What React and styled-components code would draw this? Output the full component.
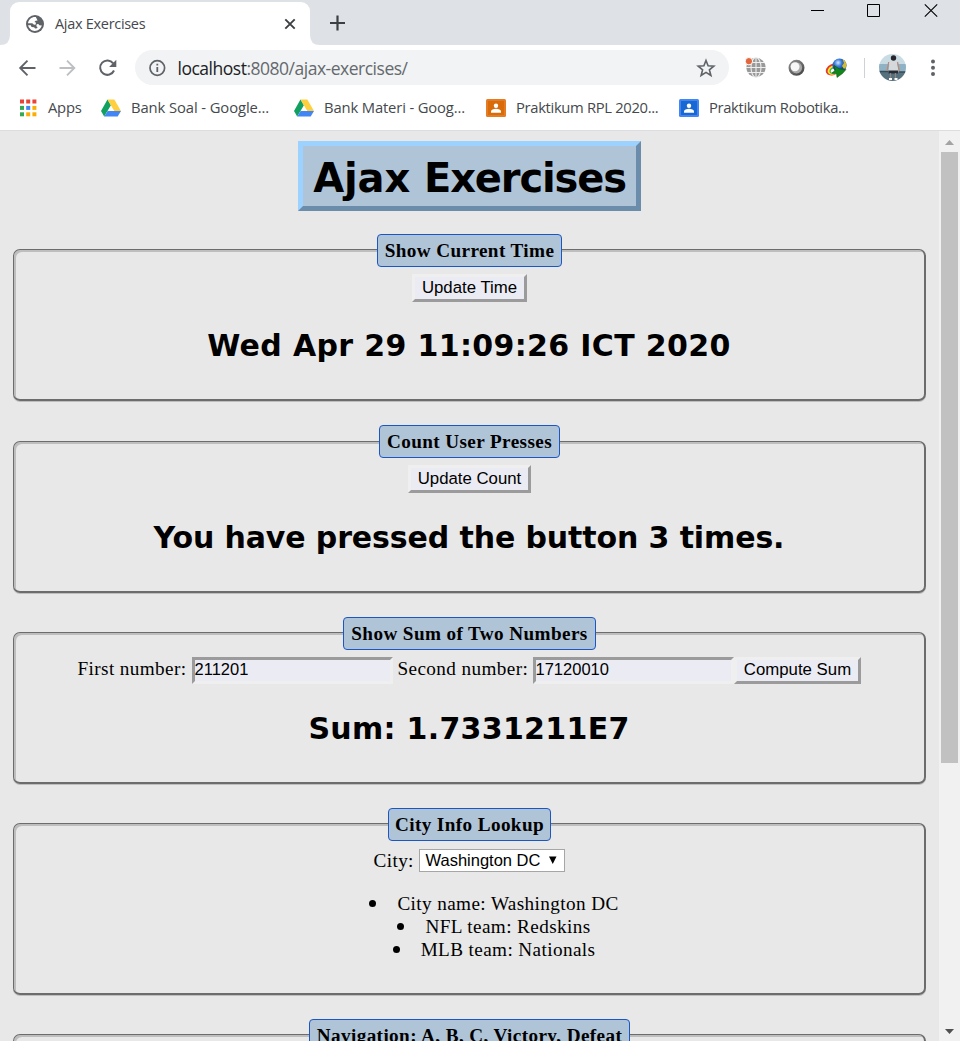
import React from 'react';
import styled, { createGlobalStyle } from 'styled-components';

const Global = createGlobalStyle`
  * { box-sizing: border-box; }
  html, body, #root { margin: 0; height: 1041px; overflow: hidden; }
  button, input, select { margin: 0; border-radius: 0; }
`;
const Window = styled.div`
  width: 960px; height: 1041px; overflow: hidden;
  display: flex; flex-direction: column; background: #e8e8e8;
  font-family: "Open Sans", "Noto Sans", sans-serif;
`;
const TabStrip = styled.header`
  height: 45px; flex: none; background: #dee1e6; display: flex; align-items: flex-end;
`;
const Curve = styled.svg`width: 10px; height: 10px; display: block; flex: none;`;
const Tab = styled.div`
  width: 300px; height: 43px; background: #fff; border-radius: 9px 9px 0 0;
  display: flex; align-items: center; padding: 0 13px 0 16px;
`;
const TabTitle = styled.span`
  flex: 1; margin-left: 11px; font-size: 14.5px; letter-spacing: ${p => p.$ls || 0}px; color: #45494d; white-space: nowrap;
`;
const NewTab = styled.svg`width: 16px; height: 16px; margin: 0 0 14px 9px;`;
const WindowButtons = styled.div`
  margin-left: auto; align-self: flex-start; display: flex; gap: 42px; padding: 3px 22px 0 0;
`;
const Toolbar = styled.div`
  height: 45px; flex: none; background: #fff; display: flex; align-items: center; padding: 0 17px;
`;
const NavIcon = styled.svg`width: 20px; height: 20px; flex: none; margin-right: 20px;`;
const Omnibox = styled.div`
  width: 594px; height: 35px; margin-left: -2px; border-radius: 18px; background: #f1f3f4;
  display: flex; align-items: center; padding: 0 13px 0 13px; flex: none;
`;
const Url = styled.span`
  flex: 1; margin-left: 11.5px; font-size: 17.5px; letter-spacing: ${p => p.$ls || 0}px; color: #65696e;
  white-space: nowrap; line-height: 34px;
`;
const Host = styled.span`color: #202124;`;
const Extensions = styled.div`display: flex; align-items: center; margin-left: 15px; flex: none;`;
const Separator = styled.i`width: 1px; height: 20px; background: #cfd1d4; margin: 0 14px 0 17px;`;
const Bookmarks = styled.nav`
  height: 41px; flex: none; background: #fff; border-bottom: 1px solid #dcdde0;
  display: flex; align-items: center; padding: 0 0 5px 18px;
`;
const Bookmark = styled.div`
  display: flex; align-items: center; width: ${p => p.$w}px; height: 20px; line-height: 18px; flex: none; font-size: 14.8px;
  letter-spacing: ${p => p.$ls}px; color: #45494d; white-space: nowrap;
  span { margin: -1px 0 1px 10px; }
  svg { flex: none; }
`;
const Viewport = styled.div`flex: 1; min-height: 0; display: flex;`;
const Page = styled.main`
  flex: 1; min-width: 0; overflow: hidden; display: flex; flex-direction: column; align-items: center;
  padding-top: 10px; font-family: "Liberation Serif", "Times New Roman", serif; font-size: 19.2px;
  letter-spacing: 0.39px; color: #000;
`;
const Title = styled.h1`
  margin: 0 0 22.8px; width: 343px; height: 70px; flex: none; border: 5px solid;
  border-color: #9cd2ff #6b8dab #6b8dab #9cd2ff; background: #b0c4d8;
  font: bold 40px/64px "DejaVu Sans", Verdana, sans-serif; text-align: center; white-space: nowrap;
`;
const Word = styled.span`letter-spacing: ${p => p.$ls}px;`;
const Panel = styled.section`
  width: 913px; height: ${p => p.$h || 167.4}px; margin-bottom: 24px; flex: none;
  display: flex; flex-direction: column; align-items: center; padding-top: 15.4px;
`;
const Frame = styled.div`
  width: 100%; flex: 1; border: solid #6c6c6c; border-width: 1px 2px 2px 1px; border-radius: 7px;
  box-shadow: inset 2px 2px 0 #bebebe, 0 1px 0 #bebebe;
  display: flex; flex-direction: column; align-items: center;
`;
const Legend = styled.h3`
  margin: -16.4px 0 0; height: 33px; padding: 0 0 0 1px; width: ${p => p.$w}px; flex: none;
  border: 1px solid #1c56c4; border-radius: 4px; background: #b0c4d8;
  font-size: 19.2px; font-weight: bold; line-height: 32px; text-align: center; white-space: nowrap;
`;
const Row = styled.div`
  height: 28px; margin-top: 7px; flex: none; display: flex; align-items: flex-start; white-space: nowrap;
  padding-top: ${p => p.$top || 0}px;
`;
const Button = styled.button`
  width: ${p => p.$w}px; height: ${p => p.$h || 28}px; padding: 0 0 0 1px; border: 3px solid; border-color: #efefef #9b9b9b #9b9b9b #efefef;
  background: #ebebf3; color: #000; font: 16.8px/20px "Liberation Sans", Arial, sans-serif; letter-spacing: 0;
`;
const Field = styled.input`
  width: 201px; height: 27px; padding: 0 0 1px; border: 3px solid; border-color: #9b9b9b #efefef #efefef #9b9b9b;
  background: #ebebf3; color: #000; font: 16.5px "Liberation Sans", Arial, sans-serif; letter-spacing: 0;
`;
const Label = styled.label`
  width: ${p => p.$w}px; padding-left: ${p => p.$left || 0}px; line-height: 24px;
`;
const Result = styled.h2`
  margin: ${p => p.$top || 25}px 0 0; font: bold 30px/38px "DejaVu Sans", Verdana, sans-serif;
  letter-spacing: ${p => p.$ls || 0}px; white-space: nowrap;
`;
const Select = styled.div`
  width: 146px; height: 23px; border: 1px solid #a6a6a6; background: #fff; padding: 0 7px 0 6px;
  display: flex; align-items: center; justify-content: space-between;
  font: 16.5px "Liberation Sans", Arial, sans-serif; letter-spacing: 0;
`;
const List = styled.ul`
  margin: 16px 0 0; padding: 0 0 0 78px; list-style: none; text-align: center;
`;
const Item = styled.li`
  height: 23px; line-height: 23px; display: flex; align-items: center; justify-content: center;
  &::before { content: ""; width: 7px; height: 7px; border-radius: 50%; background: #000; margin: 1px 21px 0 -28px; }
`;
const ScrollBar = styled.aside`
  width: 21px; flex: none; background: #f1f1f1; display: flex; flex-direction: column; align-items: center;
  padding: 9px 1px 7px 1px;
`;
const Thumb = styled.div`width: 17px; height: 611px; margin: 7px 0 auto; background: #c1c1c1;`;
const Arrow = styled.svg`width: 9px; height: 5px; flex: none;`;
const ExtIcon = styled.svg`flex: none; margin-left: ${p => p.$left || 0}px;`;

const Drive = () => (
  <svg width="20" height="18" viewBox="0 0 20 18">
    <path d="M6.5.5 0 12l3.2 5.6L9.9 6.2z" fill="#11a05f" />
    <path d="M6.5.5h6.8L20 12h-6.7z" fill="#ffcf3f" />
    <path d="M6.6 12H20l-3.3 5.6H3.2z" fill="#4285f4" />
  </svg>
);
const Classroom = ({ edge, fill }) => (
  <svg width="20" height="18" viewBox="0 0 20 18">
    <rect width="20" height="18" rx="1.5" fill={edge} />
    <rect x="2" y="2" width="16" height="14" fill={fill} />
    <circle cx="10" cy="6.7" r="2.2" fill="#fff" />
    <path d="M5 13.7v-1.4c0-3.4 10-3.4 10 0v1.4z" fill="#fff" />
  </svg>
);
const Apps = () => {
  const c = ['#ea4335', '#ea4335', '#ea4335', '#34a853', '#4285f4', '#fbad05', '#34a853', '#fbad05', '#fbad05'];
  return (
    <svg width="20" height="18" viewBox="0 0 20 18">
      {c.map((f, i) => <rect key={i} x={2 + (i % 3) * 6.2} y={0.5 + Math.floor(i / 3) * 6.4} width="4" height="4" fill={f} />)}
    </svg>
  );
};

export default function App() {
  return (
    <Window>
      <Global />
      <TabStrip>
        <Curve viewBox="0 0 10 10"><path d="M0 10Q10 10 10 0V10z" fill="#fff" /></Curve>
        <Tab>
          <svg width="18" height="18" viewBox="0 0 18 18">
            <circle cx="9" cy="9" r="9" fill="#5f6368" />
            <path d="M9.8 2.1C6 1.600 2.500 4.500 2 8.300l4.300-.1 1.700 1.500 1.800-.2.100-1.900-1.500-.600 1.300-1.200 1.900-.3z" fill="#fff" />
            <path d="M2.100 10.200c.8 3.100 3.400 5.500 6.500 5.700 3.500.1 6.500-2.200 7.200-5.300l-2.400-.4-1.100-1.300-1.600.3-.4 2.100 1.200.7-.4 1.300-2 .2-1-1.200-2.600-.300-.7-1.800z" fill="#fff" />
          </svg>
          <TabTitle $ls={-0.3}>Ajax Exercises</TabTitle>
          <svg width="14" height="14" viewBox="0 0 14 14"><path d="m2.300 2.300 9.400 9.400m0-9.400-9.400 9.400" stroke="#3c4043" strokeWidth="1.900" /></svg>
        </Tab>
        <Curve viewBox="0 0 10 10"><path d="M0 0Q0 10 10 10H0z" fill="#fff" /></Curve>
        <NewTab viewBox="0 0 16 16"><path d="M8.500 .5v15M1 8h15" stroke="#3c4043" strokeWidth="2.200" /></NewTab>
        <WindowButtons>
          <svg width="14" height="15" overflow="visible"><path d="M-1 7.500h13" stroke="#000" /></svg>
          <svg width="14" height="15" overflow="visible"><path d="M-.5 1.500h12v12h-12z" stroke="#000" fill="none" /></svg>
          <svg width="14" height="15"><path d="m.800 1.300 12.400 12.400m0-12.400L.8 13.700" stroke="#000" strokeWidth="1.100" /></svg>
        </WindowButtons>
      </TabStrip>
      <Toolbar>
        <NavIcon viewBox="0 0 20 20"><path d="M18.500 10H3.500M10.500 2.700 3.200 10l7.300 7.300" stroke="#5f6368" strokeWidth="1.900" fill="none" /></NavIcon>
        <NavIcon viewBox="0 0 20 20"><path d="M2.500 10H17M10 2.700l7.300 7.300-7.300 7.300" stroke="#bdc0c3" strokeWidth="1.900" fill="none" /></NavIcon>
        <NavIcon viewBox="0 0 20 20"><path d="M17 12.500A7.200 7.200 0 1 1 16.200 5.400" stroke="#5f6368" strokeWidth="2" fill="none" /><path d="M19.300 1.800v7.200h-7.200z" fill="#5f6368" /></NavIcon>
        <Omnibox>
          <svg width="18" height="18" viewBox="0 0 18 18"><circle cx="9.300" cy="9" r="7.300" fill="none" stroke="#5f6368" strokeWidth="1.700" /><path d="M9.300 8v5M9.300 4.700v1.800" stroke="#5f6368" strokeWidth="1.800" /></svg>
          <Url $ls={-0.49}><Host>localhost</Host>:8080/ajax-exercises/</Url>
          <svg width="20" height="20" viewBox="0 0 20 20"><path d="m10 2.500 2.100 5.300 5.700.4-4.400 3.600 1.500 5.700-4.900-3.100-4.900 3.100 1.500-5.700-4.400-3.600 5.700-.4z" fill="none" stroke="#5f6368" strokeWidth="1.600" /></svg>
        </Omnibox>
        <Extensions>
          <ExtIcon width="22" height="22" viewBox="0 0 22 22">
            <circle cx="12" cy="10.500" r="9.700" fill="#999" />
            <path d="M12 1v20M2 10.500h20M4 5.500h16M4 15.500h16" stroke="#eee" strokeWidth="1.100" /><ellipse cx="12" cy="10.500" rx="5" ry="10" stroke="#eee" strokeWidth="1.100" fill="none" />
            <circle cx="4.900" cy="4.200" r="3.700" fill="#e2673c" stroke="#fff" />
          </ExtIcon>
          <ExtIcon width="20" height="20" viewBox="0 0 20 20" $left={20}>
            <defs><linearGradient id="ring" x2=".7" y2="1"><stop stopColor="#8d8d8d" /><stop offset="1" stopColor="#4d4d4d" /></linearGradient></defs>
            <circle cx="10.500" cy="9.800" r="6.800" fill="#a8a8a8" stroke="url(#ring)" strokeWidth="2.400" /><circle cx="9" cy="8.800" r="4.500" fill="#f7f7f7" />
          </ExtIcon>
          <ExtIcon width="22" height="20" viewBox="0 0 22 20" $left={19}>
            <defs><radialGradient id="globe" cx=".4" cy=".3"><stop stopColor="#d5e6ff" /><stop offset=".5" stopColor="#3e7fdc" /><stop offset="1" stopColor="#164594" /></radialGradient></defs>
            <ellipse cx="8" cy="11.500" rx="7.500" ry="5.500" fill="#e23a31" transform="rotate(-25 8 11.500)" />
            <ellipse cx="8.500" cy="12" rx="6.200" ry="4.500" fill="#ffe327" transform="rotate(-25 8.500 12)" />
            <ellipse cx="9" cy="12.300" rx="4.800" ry="3.400" fill="#35b64b" transform="rotate(-25 9 12.300)" />
            <ellipse cx="8.500" cy="12.500" rx="3" ry="1.800" fill="#fff" transform="rotate(-25 8.500 12.500)" />
            <circle cx="14.500" cy="7.500" r="7" fill="url(#globe)" />
            <path d="M17.500 1.500c3 1 4.300 4 3.900 7.500l-2.400 2-2-3 2-3z" fill="#d4bd32" />
            <path d="M9 7.500 14.500 11l6.500.5-3.500 4-5.500 4-.500-4-4.500-.5 3.500-3z" fill="#11861b" stroke="#064c0b" strokeWidth=".5" />
          </ExtIcon>
          <Separator />
          <ExtIcon width="27" height="27" viewBox="0 0 27 27">
            <defs><clipPath id="face"><circle cx="13.500" cy="13.500" r="13.500" /></clipPath></defs>
            <g clipPath="url(#face)">
              <path d="M0 0h27v13H0z" fill="#c9dce4" /><path d="M0 10h27v9H0z" fill="#8fb3c5" /><path d="M0 18h27v9H0z" fill="#56707e" />
              <path d="M0 17.500h10M18 18h9" stroke="#374b57" strokeWidth="1.500" />
              <path d="M10.500 6.500h7.500l1.600 12H9.500z" fill="#d5d9dc" /><path d="M9.700 8 8 17M18.500 8l1.800 9" stroke="#b98a7a" strokeWidth="1.300" />
              <circle cx="14.500" cy="4" r="2.700" fill="#26262e" /><path d="M9.500 16.500h9.500v3H9.500z" fill="#252c36" />
              <path d="M11.500 19v6M16.500 19v6" stroke="#8d8581" strokeWidth="1.300" /><path d="M10 25h3M15.500 25h3" stroke="#fff" strokeWidth="2" />
            </g>
          </ExtIcon>
          <ExtIcon width="6" height="20" viewBox="0 0 6 20" $left={23.5}>{[3.5, 9.7, 15.9].map(y => <circle key={y} cx="3" cy={y} r="2" fill="#5f6368" />)}</ExtIcon>
        </Extensions>
      </Toolbar>
      <Bookmarks>
        <Bookmark $w={83} $ls={-0.25}><Apps /><span>Apps</span></Bookmark>
        <Bookmark $w={193} $ls={-0.1}><Drive /><span>Bank Soal - Google...</span></Bookmark>
        <Bookmark $w={192} $ls={-0.15}><Drive /><span>Bank Materi - Goog...</span></Bookmark>
        <Bookmark $w={193} $ls={-0.34}><Classroom edge="#e37c22" fill="#d96b0b" /><span>Praktikum RPL 2020...</span></Bookmark>
        <Bookmark $w={193} $ls={-0.35}><Classroom edge="#4285f4" fill="#1967d2" /><span>Praktikum Robotika...</span></Bookmark>
      </Bookmarks>
      <Viewport>
        <Page>
          <Title><Word $ls={-0.1}>Ajax </Word><Word $ls={-1.15}>Exercises</Word></Title>
          <Panel><Frame>
            <Legend $w={185}>Show Current Time</Legend>
            <Row><Button $w={115}>Update Time</Button></Row>
            <Result $ls={0.35}>Wed Apr 29 11:09:26 ICT 2020</Result>
          </Frame></Panel>
          <Panel><Frame>
            <Legend $w={181}>Count User Presses</Legend>
            <Row><Button $w={123}>Update Count</Button></Row>
            <Result $ls={-0.12} $top={25.6}>You have pressed the button 3 times.</Result>
          </Frame></Panel>
          <Panel><Frame>
            <Legend $w={253}>Show Sum of Two Numbers</Legend>
            <Row>
              <Label $w={114}>First number:</Label><Field defaultValue="211201" />
              <Label $w={140} $left={5}>Second number:</Label><Field defaultValue="17120010" />
              <Button $w={127} $h={27}>Compute Sum</Button>
            </Row>
            <Result $ls={0.3}>Sum: 1.7331211E7</Result>
          </Frame></Panel>
          <Panel $h={187}><Frame>
            <Legend $w={163}>City Info Lookup</Legend>
            <Row $top={1}>
              <Label $w={45}>City:</Label>
              <Select>Washington DC<svg width="8" height="8" viewBox="0 0 8 8"><path d="M0 .5h7.500L3.750 8z" /></svg></Select>
            </Row>
            <List>
              <Item>City name: Washington DC</Item>
              <Item>NFL team: Redskins</Item>
              <Item>MLB team: Nationals</Item>
            </List>
          </Frame></Panel>
          <Panel><Frame><Legend $w={321}>Navigation: A, B, C, Victory, Defeat</Legend></Frame></Panel>
        </Page>
        <ScrollBar>
          <Arrow viewBox="0 0 9 5"><path d="M4.500 0 9 5H0z" fill="#a3a3a3" /></Arrow>
          <Thumb />
          <Arrow viewBox="0 0 9 5"><path d="M4.500 5 9 0H0z" fill="#505050" /></Arrow>
        </ScrollBar>
      </Viewport>
    </Window>
  );
}
